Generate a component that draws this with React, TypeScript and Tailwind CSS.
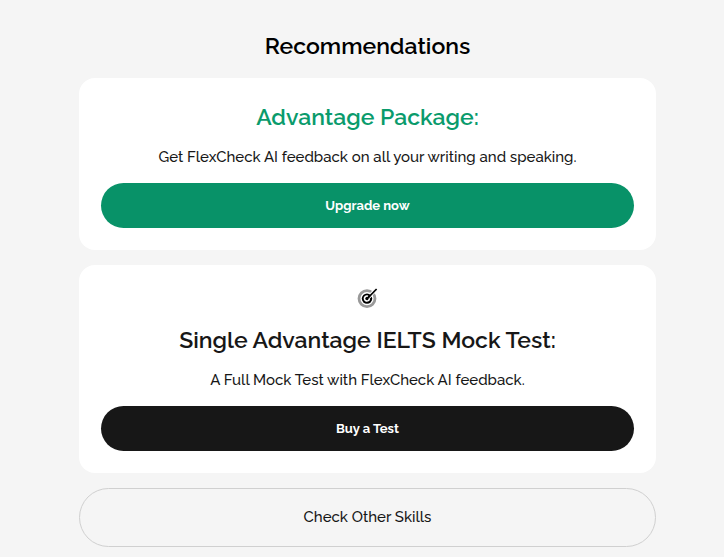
function TargetIcon() {
  return (
    <svg
      className="w-6 h-6 mb-3"
      viewBox="0 0 24 24"
      fill="none"
      aria-hidden="true"
    >
      <circle cx="11" cy="11.6" r="8" stroke="#999999" strokeWidth="2.8" />
      {/* gap around the arrow */}
      <path d="M14.5 8.1L21 1.6" stroke="#ffffff" strokeWidth="3.6" />
      <circle cx="11" cy="11.6" r="5.2" fill="#000000" />
      <path
        d="M13.4 12A2.5 2.5 0 1 1 12 9.2"
        stroke="#ffffff"
        strokeWidth="1.6"
      />
      <path d="M12.5 12.1L16.5 8.1" stroke="#ffffff" strokeWidth="1.2" />
      <path d="M11 11.8L20.6 2" stroke="#000000" strokeWidth="1.7" />
    </svg>
  );
}

export default function App() {
  return (
    <main className="min-h-screen bg-[#f5f5f5] pt-[29px] pb-[10px] pl-[79px] pr-[68px] font-['Raleway','Lato',sans-serif] text-[#171717] text-center">
      <div className="flex flex-col gap-[15px]">
        <h1 className="text-[23px] leading-[34px] font-semibold text-black">
          Recommendations
        </h1>

        {/* Upgrade */}
        <section className="bg-white rounded-2xl p-[22px]">
          <h2 className="text-[23px] leading-[34px] font-semibold text-[#0a9b6c] mb-3">
            Advantage Package:
          </h2>
          <p className="text-[15px] leading-[22px] font-medium mb-[15px]">
            Get FlexCheck AI feedback on all your writing and speaking.
          </p>
          <button
            type="button"
            className="w-full h-[45px] rounded-full bg-[#089268] text-white text-[13px] font-bold"
          >
            Upgrade now
          </button>
        </section>

        {/* Mock test */}
        <section className="bg-white rounded-2xl p-[22px] flex flex-col items-center">
          <TargetIcon />
          <h2 className="text-[23px] leading-[34px] font-semibold mb-3">
            Single Advantage IELTS Mock Test:
          </h2>
          <p className="text-[15px] leading-[22px] font-medium mb-[15px]">
            A Full Mock Test with FlexCheck AI feedback.
          </p>
          <button
            type="button"
            className="w-full h-[45px] rounded-full bg-[#171717] text-white text-[13px] font-bold"
          >
            Buy a Test
          </button>
        </section>

        <button
          type="button"
          className="w-full h-[59px] rounded-full border border-[#d0d0d0] text-[15px] font-medium"
        >
          Check Other Skills
        </button>
      </div>
    </main>
  );
}
